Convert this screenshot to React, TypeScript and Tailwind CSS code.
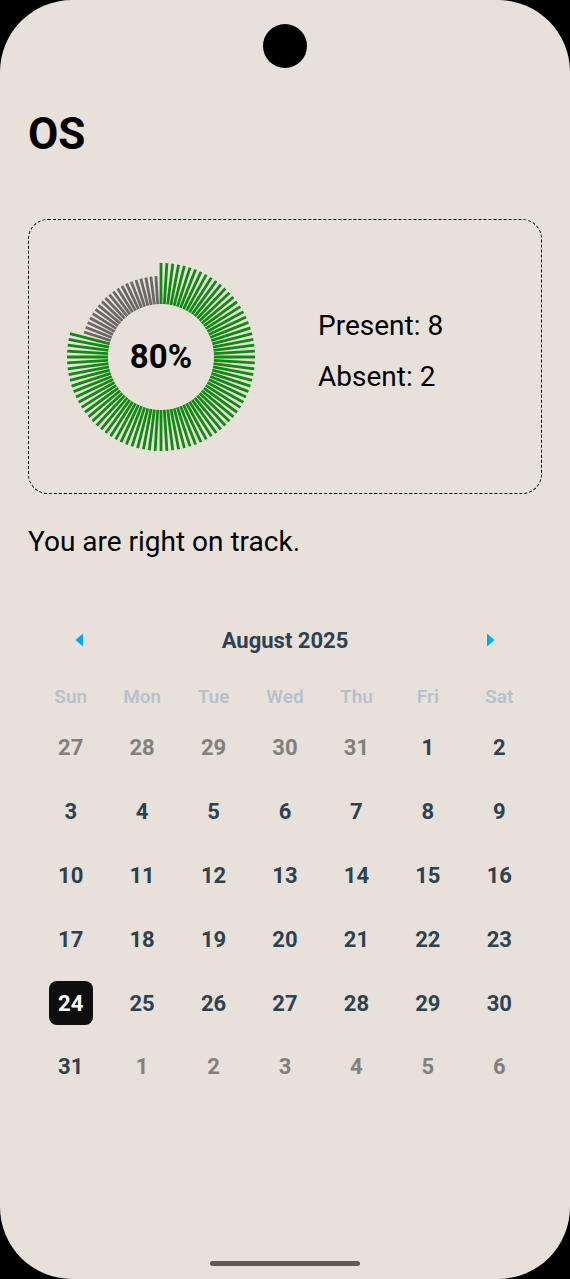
import React from "react";

const TICKS = 100;

function Gauge() {
  const cx = 100;
  const cy = 100;
  const lines = [];
  for (let i = 0; i < TICKS; i++) {
    const a = (i * 360) / TICKS;
    const rad = (a * Math.PI) / 180;
    const green = i < 80;
    const r1 = 53;
    const r2 = green ? 94 : 81;
    const s = Math.sin(rad);
    const c = Math.cos(rad);
    lines.push(
      <line
        key={i}
        x1={cx + r1 * s}
        y1={cy - r1 * c}
        x2={cx + r2 * s}
        y2={cy - r2 * c}
        stroke={green ? "#108a10" : "#6b6767"}
        strokeWidth={2.8}
      />
    );
  }
  return (
    <div className="relative w-[200px] h-[200px] shrink-0">
      <svg width="200" height="200" viewBox="0 0 200 200">
        {lines}
      </svg>
      <div className="absolute inset-0 flex items-center justify-center">
        <span className="text-[33px] font-bold leading-none text-black">80%</span>
      </div>
    </div>
  );
}

type Day = { d: number; cur: boolean; sel?: boolean };

function buildWeeks(): Day[][] {
  const days: Day[] = [];
  [27, 28, 29, 30, 31].forEach((d) => days.push({ d, cur: false }));
  for (let d = 1; d <= 31; d++) days.push({ d, cur: true, sel: d === 24 });
  [1, 2, 3, 4, 5, 6].forEach((d) => days.push({ d, cur: false }));
  const weeks: Day[][] = [];
  for (let i = 0; i < days.length; i += 7) weeks.push(days.slice(i, i + 7));
  return weeks;
}

function Calendar() {
  const names = ["Sun", "Mon", "Tue", "Wed", "Thu", "Fri", "Sat"];
  const weeks = buildWeeks();
  return (
    <div className="mt-[62px] mx-[7px]">
      <div className="h-[40px] flex items-center justify-between px-[40px]">
        <svg width="9" height="14" viewBox="0 0 9 14">
          <path d="M8 0.5 L0.5 7 L8 13.5 Z" fill="#00adf5" />
        </svg>
        <span className="text-[22px] font-bold text-[#2d4150]">August 2025</span>
        <svg width="9" height="14" viewBox="0 0 9 14">
          <path d="M1 0.5 L8.5 7 L1 13.5 Z" fill="#00adf5" />
        </svg>
      </div>
      <div className="mt-[19px] h-[36px] grid grid-cols-7 items-center">
        {names.map((n) => (
          <div key={n} className="text-center text-[19px] font-semibold text-[#b6c1cd]">
            {n}
          </div>
        ))}
      </div>
      <div className="mt-[1px] flex flex-col">
        {weeks.map((w, wi) => (
          <div key={wi} className="h-[63.8px] grid grid-cols-7 items-center">
            {w.map((day, di) => (
              <div key={di} className="flex justify-center">
                {day.sel ? (
                  <div className="w-[44px] h-[44px] rounded-[8px] bg-[#0f0f0f] flex items-center justify-center text-[22px] font-bold text-white">
                    {day.d}
                  </div>
                ) : (
                  <div
                    className={
                      day.cur
                        ? "h-[44px] flex items-center text-[22px] font-bold text-[#2d4150]"
                        : "h-[44px] flex items-center text-[22px] font-bold text-[#808080]"
                    }
                  >
                    {day.d}
                  </div>
                )}
              </div>
            ))}
          </div>
        ))}
      </div>
    </div>
  );
}

export default function App() {
  return (
    <div
      className="w-[570px] h-[1279px] bg-black overflow-hidden"
      style={{ fontFamily: "Roboto, 'Noto Sans', sans-serif" }}
    >
      <div className="relative w-full h-full rounded-[72px] bg-[#e7e1da] flex flex-col px-[28px]">
        <div className="absolute left-[263px] top-[24px] w-[44px] h-[44px] rounded-full bg-black" />
        <h1 className="mt-[112px] text-[44px] leading-[44px] font-bold text-black">OS</h1>
        <div className="mt-[63px] h-[275px] rounded-[20px] border-[1.5px] border-dashed border-black flex items-center pl-[32px]">
          <Gauge />
          <div className="ml-[57px] flex flex-col mb-[12px]">
            <span className="text-[28px] leading-[51px] text-black">Present: 8</span>
            <span className="text-[28px] leading-[51px] text-black">Absent: 2</span>
          </div>
        </div>
        <p className="mt-[32px] text-[28px] leading-[32px] text-black">You are right on track.</p>
        <Calendar />
        <div className="absolute left-[210px] top-[1261px] w-[150px] h-[5px] rounded-full bg-[#5f5a55]" />
      </div>
    </div>
  );
}
